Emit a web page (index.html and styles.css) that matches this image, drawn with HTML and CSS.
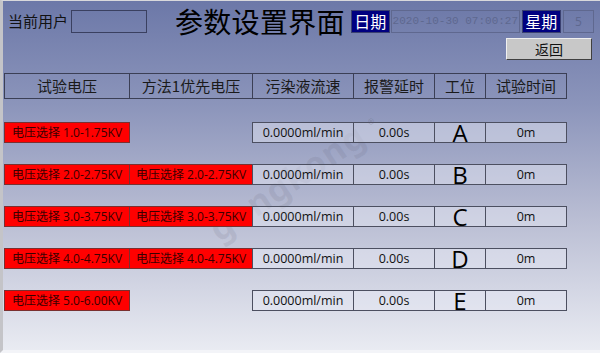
FILE: index.html
```html
<!DOCTYPE html>
<html lang="zh">
<head>
<meta charset="utf-8">
<link rel="stylesheet" href="styles.css">
</head>
<body>
<div class="screen">
  <div class="watermark">gongkong</div>
  <div class="top">
    <span class="user-label">当前用户</span>
    <span class="user-box"></span>
    <h1 class="title">参数设置界面</h1>
    <span class="tag">日期</span>
    <span class="field date">2020-10-30 07:00:27</span>
    <span class="tag week">星期</span>
    <span class="field wk">5</span>
  </div>
  <div class="actions"><button class="back">返回</button></div>

  <div class="grid head">
    <div class="hc">试验电压</div>
    <div class="hc">方法1优先电压</div>
    <div class="hc">污染液流速</div>
    <div class="hc">报警延时</div>
    <div class="hc">工位</div>
    <div class="hc">试验时间</div>
  </div>

  <div class="grid row first">
    <div class="red">电压选择 1.0-1.75KV</div>
    <div class="empty"></div>
    <div class="dc">0.0000ml/min</div>
    <div class="dc">0.00s</div>
    <div class="dc big">A</div>
    <div class="dc">0m</div>
  </div>
  <div class="grid row">
    <div class="red">电压选择 2.0-2.75KV</div>
    <div class="red">电压选择 2.0-2.75KV</div>
    <div class="dc">0.0000ml/min</div>
    <div class="dc">0.00s</div>
    <div class="dc big">B</div>
    <div class="dc">0m</div>
  </div>
  <div class="grid row">
    <div class="red">电压选择 3.0-3.75KV</div>
    <div class="red">电压选择 3.0-3.75KV</div>
    <div class="dc">0.0000ml/min</div>
    <div class="dc">0.00s</div>
    <div class="dc big">C</div>
    <div class="dc">0m</div>
  </div>
  <div class="grid row">
    <div class="red">电压选择 4.0-4.75KV</div>
    <div class="red">电压选择 4.0-4.75KV</div>
    <div class="dc">0.0000ml/min</div>
    <div class="dc">0.00s</div>
    <div class="dc big">D</div>
    <div class="dc">0m</div>
  </div>
  <div class="grid row">
    <div class="red">电压选择 5.0-6.00KV</div>
    <div class="empty"></div>
    <div class="dc">0.0000ml/min</div>
    <div class="dc">0.00s</div>
    <div class="dc big">E</div>
    <div class="dc">0m</div>
  </div>
  <div class="reg">®</div>
</div>
</body>
</html>
```

FILE: styles.css
```css
* { box-sizing: border-box; }
html, body { margin: 0; padding: 0; }
body {
  width: 600px;
  height: 353px;
  overflow: hidden;
  font-family: "Noto Sans CJK SC", "Noto Sans", sans-serif;
  color: #111;
}
.screen {
  position: relative;
  width: 600px;
  height: 353px;
  background: linear-gradient(180deg, #6c78a8 0%, #8c95bb 30%, #b9bdd3 62%, #e9ebf2 100%);
  border-left: 3px solid #c4c4c8;
  border-top: 1px solid #d8d8dc;
  border-bottom: 3px solid #f3f4f8;
  overflow: hidden;
}
.top {
  position: relative;
  display: flex;
  align-items: flex-start;
  padding-top: 9px;
  height: 33px;
}
.user-label {
  margin-left: 5px;
  font-size: 15px;
  line-height: 22px;
  color: #111;
}
.user-box {
  width: 76px;
  height: 23px;
  margin-left: 3px;
  border: 1px solid #3a4060;
}
.title {
  margin: -8px 0 0 28px;
  font-size: 28px;
  line-height: 38px;
  font-weight: normal;
  color: #000;
  letter-spacing: 0.3px;
  white-space: nowrap;
}
.tag {
  flex: none;
  width: 39px;
  height: 23px;
  margin-left: 6px;
  background: #000080;
  color: #fff;
  font-size: 16px;
  line-height: 21px;
  text-align: center;
  border: 1px solid #3a4070;
}
.tag.week { margin-left: 2px; }
.field {
  flex: none;
  height: 23px;
  margin-left: 1px;
  border: 1px solid #5f688f;
  color: #5e688f;
  font-family: "Liberation Mono", monospace;
  font-size: 11px;
  line-height: 21px;
  text-align: center;
  white-space: nowrap;
}
.field.date { width: 129px; }
.field.wk { width: 31px; margin-left: 2px; font-family: "Noto Sans", sans-serif; font-size: 12px; }
.actions {
  position: relative;
  display: flex;
  justify-content: flex-end;
  padding-right: 8px;
  margin-top: 4px;
  height: 22px;
}
.back {
  width: 86px;
  height: 22px;
  padding: 0;
  background: #c8c8c8;
  border: 1px solid;
  border-color: #f0f0f0 #404040 #404040 #f0f0f0;
  font-family: "Noto Sans CJK SC", sans-serif;
  font-size: 14px;
  line-height: 20px;
  color: #111;
}
.grid {
  position: relative;
  display: grid;
  grid-template-columns: 125px 123px 101px 81px 51px 81px;
  margin-left: 1px;
  width: 562px;
}
.grid > div { margin-right: -1px; }
.head { margin-top: 13px; height: 26px; }
.hc {
  border: 1px solid #3b3f55;
  font-size: 15px;
  line-height: 24px;
  text-align: center;
  color: #1a1a1a;
  white-space: nowrap;
}
.row { height: 21px; margin-top: 21px; }
.row.first { margin-top: 23px; }
.red {
  background: #ff0000;
  border: 1px solid #7a3030;
  color: #3a0000;
  font-family: "Open Sans", "Noto Sans CJK SC", sans-serif;
  font-size: 12px;
  line-height: 19px;
  text-align: center;
  white-space: nowrap;
}
.dc {
  background: rgba(232, 235, 246, 0.45);
  border: 1px solid #4c4f60;
  font-family: "Open Sans", "Noto Sans", sans-serif;
  font-size: 12.5px;
  line-height: 19px;
  text-align: center;
  color: #111;
}
.dc.big {
  font-size: 24px;
  line-height: 19px;
  color: #000;
}
.watermark {
  position: absolute;
  left: 196px;
  top: 212px;
  font-family: "Noto Sans", sans-serif;
  font-size: 34px;
  font-weight: bold;
  letter-spacing: 1px;
  color: rgba(90, 90, 110, 0.12);
  transform: rotate(-34deg);
  transform-origin: left top;
  white-space: nowrap;
}
.reg {
  position: absolute;
  left: 365px;
  top: 113px;
  font-size: 13px;
  color: rgba(90, 90, 110, 0.3);
}
```
